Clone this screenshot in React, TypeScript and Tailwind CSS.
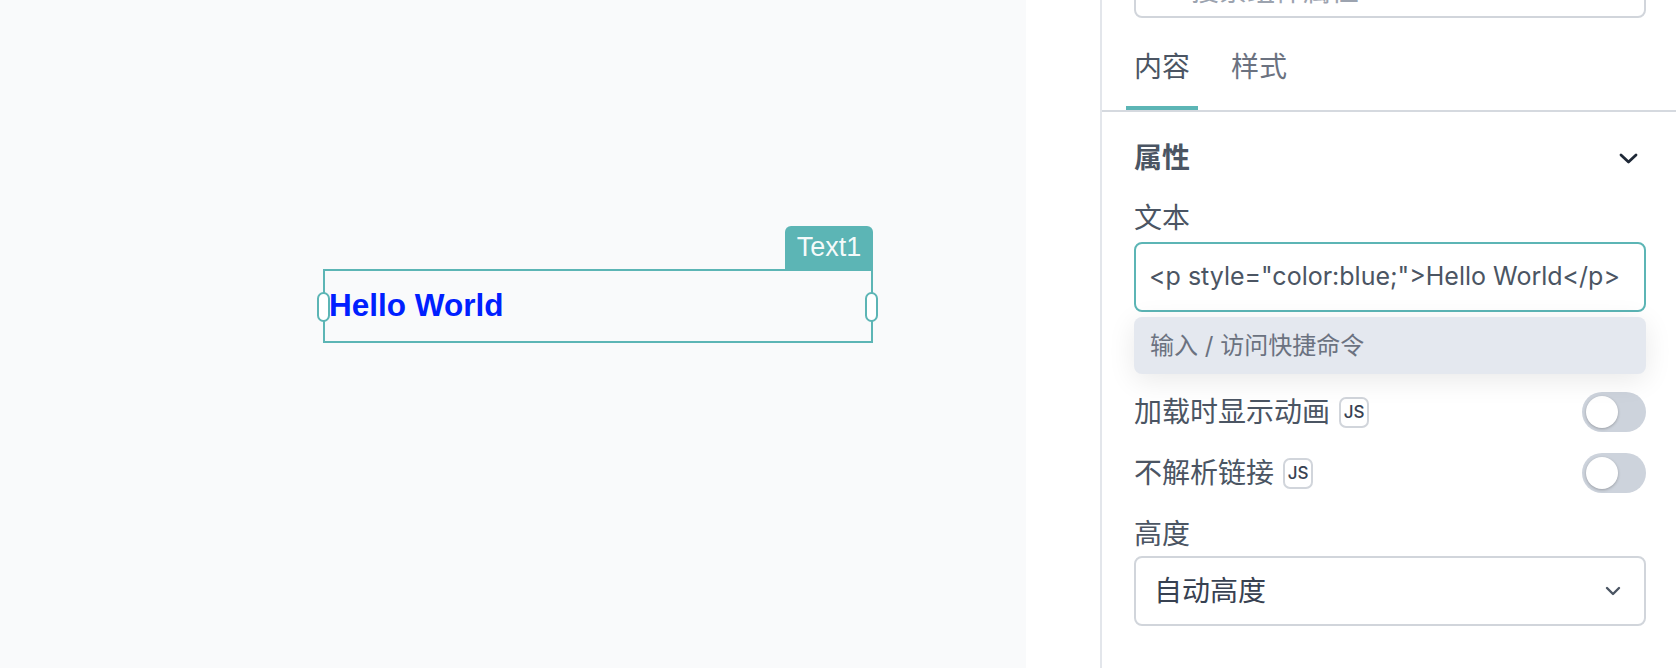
function Chevron({ className, w = 16, h = 10, sw = 2.4 }: { className?: string; w?: number; h?: number; sw?: number }) {
  return (
    <svg className={className} width={w} height={h} viewBox={`0 0 ${w} ${h}`} fill="none">
      <path
        d={`M2 2l${(w - 4) / 2} ${h - 4} ${(w - 4) / 2} -${h - 4}`}
        stroke="currentColor"
        strokeWidth={sw}
        strokeLinecap="round"
        strokeLinejoin="round"
      />
    </svg>
  );
}

function Toggle() {
  return (
    <div className="flex h-[40px] w-[64px] shrink-0 items-center rounded-full bg-[#cdd3dc] px-[4px]">
      <div className="h-[32px] w-[32px] rounded-full bg-white shadow-[0_1px_3px_rgba(0,0,0,0.25)]" />
    </div>
  );
}

function JsBadge() {
  return (
    <span className="ml-[9px] flex h-[31px] w-[30px] items-center justify-center rounded-[7px] border-2 border-[#d1d5db] text-[17px] font-medium leading-none text-[#374151]">
      JS
    </span>
  );
}

function ToggleRow({ label, className }: { label: string; className?: string }) {
  return (
    <div className={"flex h-[40px] items-center justify-between " + (className ?? "")}>
      <div className="flex items-center">
        <span className="text-[28px] leading-[28px] text-[#4b5563]">{label}</span>
        <JsBadge />
      </div>
      <Toggle />
    </div>
  );
}

export default function App() {
  return (
    <div className="flex h-[668px] w-[1676px] overflow-hidden bg-white font-['Inter','Noto_Sans_CJK_SC',sans-serif]">
      {/* Canvas */}
      <div className="relative h-full w-[1026px] shrink-0 bg-[#f9fafb] font-['Liberation_Sans',sans-serif]">
        <div className="absolute left-[323px] top-[269px] flex h-[74px] w-[550px] items-center border-2 border-[#5cb5b5] pl-[4px]">
          <span className="text-[31.5px] font-bold leading-none text-[#0020ff]">Hello World</span>
          <div className="absolute left-[-8px] top-[21px] h-[30px] w-[13px] rounded-full border-2 border-[#5cb5b5] bg-white" />
          <div className="absolute right-[-7px] top-[21px] h-[30px] w-[13px] rounded-full border-2 border-[#5cb5b5] bg-white" />
        </div>
        <div className="absolute left-[785px] top-[226px] flex h-[43px] w-[88px] items-center justify-center rounded-t-[6px] bg-[#5cb5b5] text-[27px] leading-none text-white/95">
          Text1
        </div>
      </div>

      <div className="h-full w-[74px] shrink-0 bg-white" />

      {/* Panel */}
      <div className="relative flex h-full min-w-0 flex-1 flex-col border-l-2 border-[#e3e6eb] bg-white">
        <div className="-mt-[52px] pl-[32px] pr-[30px]">
          <div className="flex h-[70px] items-start rounded-[8px] border-2 border-[#d1d5db] pl-[55px] pt-[27px]">
            <span className="text-[28px] leading-[28px] text-[#9ca3af]">搜索组件属性</span>
          </div>
        </div>

        <div className="flex h-[94px] shrink-0 gap-[25px] border-b-2 border-[#d5d9df] pl-[24px]">
          <div className="flex h-[92px] w-[72px] flex-col items-center">
            <span className="mt-[35px] text-[28px] leading-[28px] text-[#4b5563]">内容</span>
            <div className="mt-auto h-[4px] w-full bg-[#5cb5b5]" />
          </div>
          <div className="flex h-[92px] w-[72px] flex-col items-center">
            <span className="mt-[35px] text-[28px] leading-[28px] text-[#6b7280]">样式</span>
          </div>
        </div>

        <div className="flex flex-col pl-[32px] pr-[30px] pt-[32px]">
          <div className="flex h-[28px] items-center justify-between">
            <span className="text-[28px] font-semibold leading-[28px] text-[#4b5563]">属性</span>
            <Chevron className="mr-[8px] text-[#1f2937]" w={19} h={11} sw={2.8} />
          </div>

          <span className="mt-[32px] text-[28px] leading-[28px] text-[#4b5563]">文本</span>

          <div className="relative mt-[10px]">
            <div className="flex h-[70px] items-center rounded-[8px] border-2 border-[#5cb5b5] bg-white pl-[13px] text-[25px] text-[#4b5563]">
              {'<p style="color:blue;">Hello World</p>'}
            </div>
            <div className="absolute left-0 right-0 top-[75px] z-10 flex h-[57px] items-center rounded-[8px] bg-[#e4e8ef] pl-[16px] text-[24px] text-[#6b7280] shadow-[0_6px_28px_rgba(0,0,0,0.09)]">
              输入 / 访问快捷命令
            </div>
          </div>

          <div className="mt-[19px] flex h-[40px] items-center justify-end">
            <Toggle />
          </div>
          <ToggleRow label="加载时显示动画" className="mt-[21px]" />
          <ToggleRow label="不解析链接" className="mt-[21px]" />

          <span className="mt-[27px] text-[28px] leading-[28px] text-[#4b5563]">高度</span>

          <div className="mt-[8px] flex h-[70px] items-center justify-between rounded-[8px] border-2 border-[#d1d5db] pl-[18px] pr-[23px]">
            <span className="text-[28px] leading-[28px] text-[#374151]">自动高度</span>
            <Chevron className="text-[#4b5563]" />
          </div>
        </div>
      </div>
    </div>
  );
}
